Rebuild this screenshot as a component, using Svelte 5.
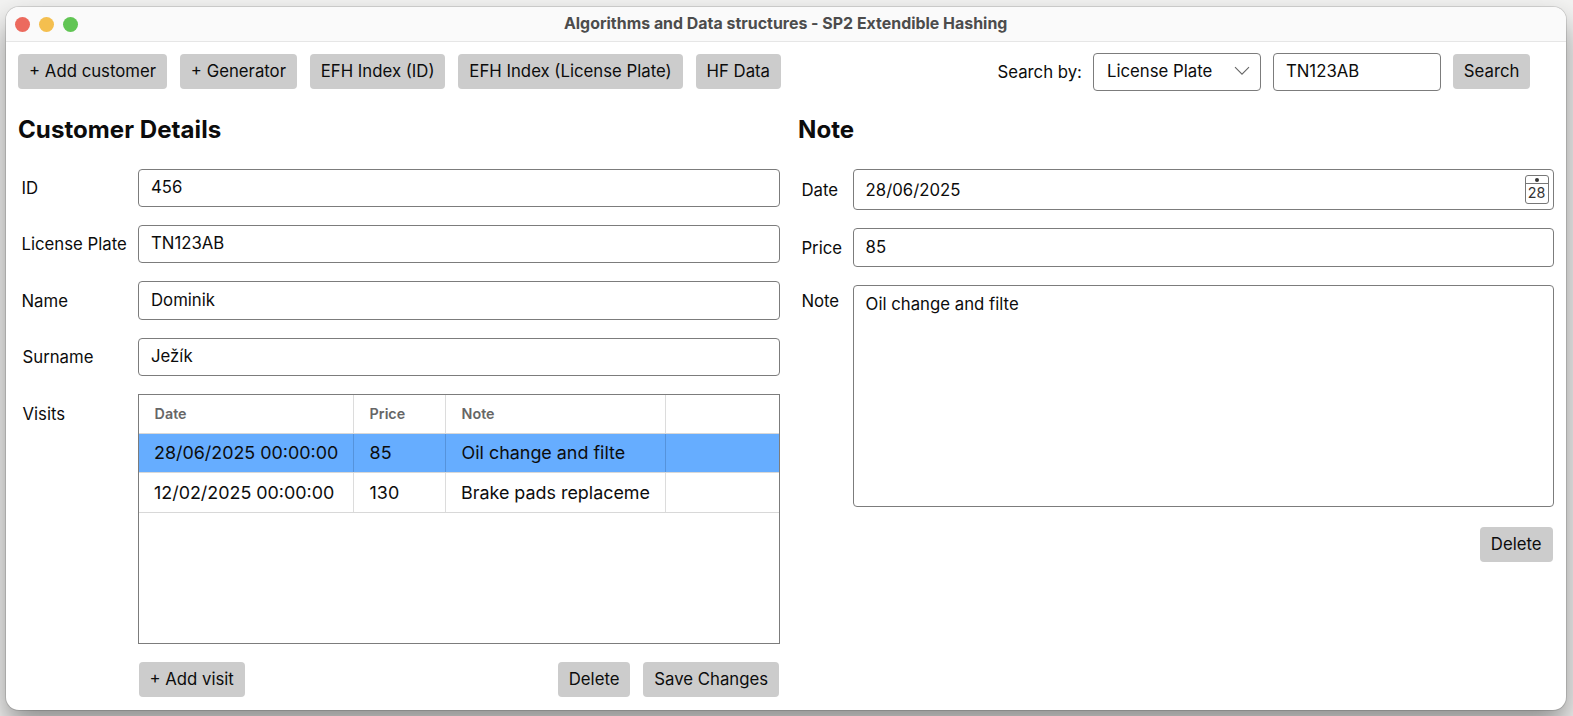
<script>
  const tools = ['+ Add customer', '+ Generator', 'EFH Index (ID)', 'EFH Index (License Plate)', 'HF Data'];
  const fields = [
    { label: 'ID', value: '456' },
    { label: 'License Plate', value: 'TN123AB' },
    { label: 'Name', value: 'Dominik' },
    { label: 'Surname', value: 'Ježík' }
  ];
  const visits = [
    { date: '28/06/2025 00:00:00', price: '85', note: 'Oil change and filte' },
    { date: '12/02/2025 00:00:00', price: '130', note: 'Brake pads replaceme' }
  ];
  let selected = $state(0);
</script>

<div class="desktop">
  <main class="window">
    <header class="titlebar">
      <div class="lights"><i class="red"></i><i class="yellow"></i><i class="green"></i></div>
      <div class="title">Algorithms and Data structures - SP2 Extendible Hashing</div>
    </header>

    <nav class="toolbar">
      <div class="tools">
        {#each tools as tool}<button>{tool}</button>{/each}
      </div>
      <div class="search">
        <span class="by">Search by:</span>
        <div class="field select">
          <span>License Plate</span>
          <svg width="16" height="10" viewBox="0 0 16 10"><path d="M1 1.2 8 8.2 15 1.2" fill="none" stroke="#666" stroke-width="1.1" /></svg>
        </div>
        <div class="field query">TN123AB</div>
        <button>Search</button>
      </div>
    </nav>

    <div class="columns">
      <section class="customer">
        <h2>Customer Details</h2>
        <div class="form">
          {#each fields as f}
            <span class="label">{f.label}</span>
            <div class="field">{f.value}</div>
          {/each}
          <span class="label">Visits</span>
          <div class="table">
            <div class="row head"><span>Date</span><span>Price</span><span>Note</span><span></span></div>
            {#each visits as v, i}
              <div class="row" class:selected={selected === i} onclick={() => (selected = i)} role="presentation">
                <span>{v.date}</span><span>{v.price}</span><span>{v.note}</span><span></span>
              </div>
            {/each}
          </div>
        </div>
        <div class="actions">
          <button>+ Add visit</button>
          <div class="tools"><button>Delete</button><button>Save Changes</button></div>
        </div>
      </section>

      <section class="note">
        <h2>Note</h2>
        <div class="form">
          <span class="label">Date</span>
          <div class="field date">
            <span>28/06/2025</span>
            <div class="calendar"><div class="ring"><i></i></div><b>28</b></div>
          </div>
          <span class="label">Price</span>
          <div class="field">85</div>
          <span class="label top">Note</span>
          <div class="field area">Oil change and filte</div>
        </div>
        <div class="end"><button>Delete</button></div>
      </section>
    </div>
  </main>
</div>

<style>
  :global(body) { margin: 0; }
  .desktop {
    box-sizing: border-box;
    width: 1573px;
    height: 716px;
    padding: 7px 7px 6px 6px;
    overflow: hidden;
    background: #f3f3f2;
    font: 16.76px/20px Inter, sans-serif;
    color: #0c0c0c;
  }
  .desktop * { box-sizing: border-box; }
  .window {
    height: 703px;
    border-radius: 13px;
    background: #fff;
    box-shadow: 0 0 0 1px rgba(0, 0, 0, 0.12), 0 16px 30px rgba(0, 0, 0, 0.42);
    overflow: hidden;
  }
  .titlebar {
    display: grid;
    grid-template-columns: 1fr auto 1fr;
    align-items: center;
    height: 35px;
    padding: 0 10px 0 9.3px;
    background: #fafafa;
    border-bottom: 1px solid #e6e6e6;
  }
  .lights { display: flex; gap: 9px; }
  .lights i { width: 15px; height: 15px; border-radius: 50%; }
  .red { background: #ec6a5e; }
  .yellow { background: #f4bf4f; }
  .green { background: #61c554; }
  .title { font-size: 15.9px; font-weight: 700; letter-spacing: 0.02px; color: #4c4c4c; }
  .toolbar {
    display: flex;
    justify-content: space-between;
    align-items: center;
    height: 61px;
    padding: 0 35.7px 1px 12.2px;
  }
  .tools { display: flex; gap: 13px; }
  button {
    height: 35px;
    padding: 0 10.9px 1px;
    border: 0;
    border-radius: 4px;
    background: #ccc;
    color: #0c0c0c;
    font: inherit;
    white-space: nowrap;
  }
  .toolbar button { margin-bottom: 1px; }
  .search { display: flex; align-items: center; gap: 12px; }
  .by { margin-right: -1px; }
  .field {
    display: flex;
    align-items: center;
    height: 38.5px;
    padding: 0 12px 1.5px;
    border: 1px solid #7c7c7c;
    border-radius: 4px;
    background: #fff;
  }
  .select { width: 168px; justify-content: space-between; padding-left: 13px; padding-right: 10px; }
  .query { width: 168px; }
  .columns { display: flex; gap: 18px; padding: 0 12.5px; }
  .customer { width: 761.5px; }
  .note { width: 755.5px; }
  h2 { margin: 0; padding: 13px 0 0; height: 65.6px; font-size: 24.1px; line-height: 28px; font-weight: 700; letter-spacing: 0.03px; }
  .customer h2 { margin-left: -0.5px; }
  .form { display: grid; grid-template-columns: 119.5px 1fr; row-gap: 17.9px; }
  .label { height: 38.5px; padding: 9.4px 0 0 3px; white-space: nowrap; }
  .customer .label:nth-of-type(n + 4) { padding-left: 4px; }
  .table { height: 250px; border: 1px solid #7c7c7c; }
  .row { display: grid; grid-template-columns: 215px 92px 220px 1fr; height: 39.5px; border-bottom: 1px solid #d8d8d8; font-size: 17.9px; }
  .row span { display: flex; align-items: center; padding-left: 15.6px; border-right: 1px solid #dcdcdc; white-space: nowrap; }
  .row span:first-child { padding-left: 15px; }
  .row span:last-child { border-right: 0; }
  .row:last-child span { padding-top: 1px; }
  .row:last-child span:nth-child(3) { padding-left: 15px; }
  .head { height: 38.5px; font-size: 14.3px; font-weight: 600; color: #666; }
  .head span:first-child { padding-left: 15.6px; }
  .selected { background: #66adff; }
  .selected span { border-color: #5593dc; }
  .actions { display: flex; justify-content: space-between; margin: 18px 1px 0 120px; }
  .note .form { grid-template-columns: 54.6px 1fr; row-gap: 18px; }
  .note .label { padding-left: 3.4px; }
  .note .form .date { height: 41px; margin-top: 0.5px; justify-content: space-between; padding: 0 4px 0 12px; }
  .note .form .date + .label { padding-top: 10.4px; }
  .note .form .date ~ .field { position: relative; top: 0.4px; }
  .note .label:first-child { padding-top: 11.5px; }
  .note .form .area { height: 222px; align-items: flex-start; padding-top: 8px; }
  .note .label.top { padding-top: 6.6px; }
  .calendar { width: 24px; height: 29px; border: 1px solid #777; border-radius: 3px; color: #333; }
  .ring { display: flex; align-items: center; justify-content: center; height: 8px; border-bottom: 1px solid #777; }
  .ring i { width: 4px; height: 4px; border-radius: 50%; background: #333; }
  .calendar b { display: block; font-size: 14.3px; line-height: 18px; font-weight: 400; text-align: center; }
  .end { display: flex; justify-content: flex-end; margin: 20.4px 1px 0 0; }
</style>
